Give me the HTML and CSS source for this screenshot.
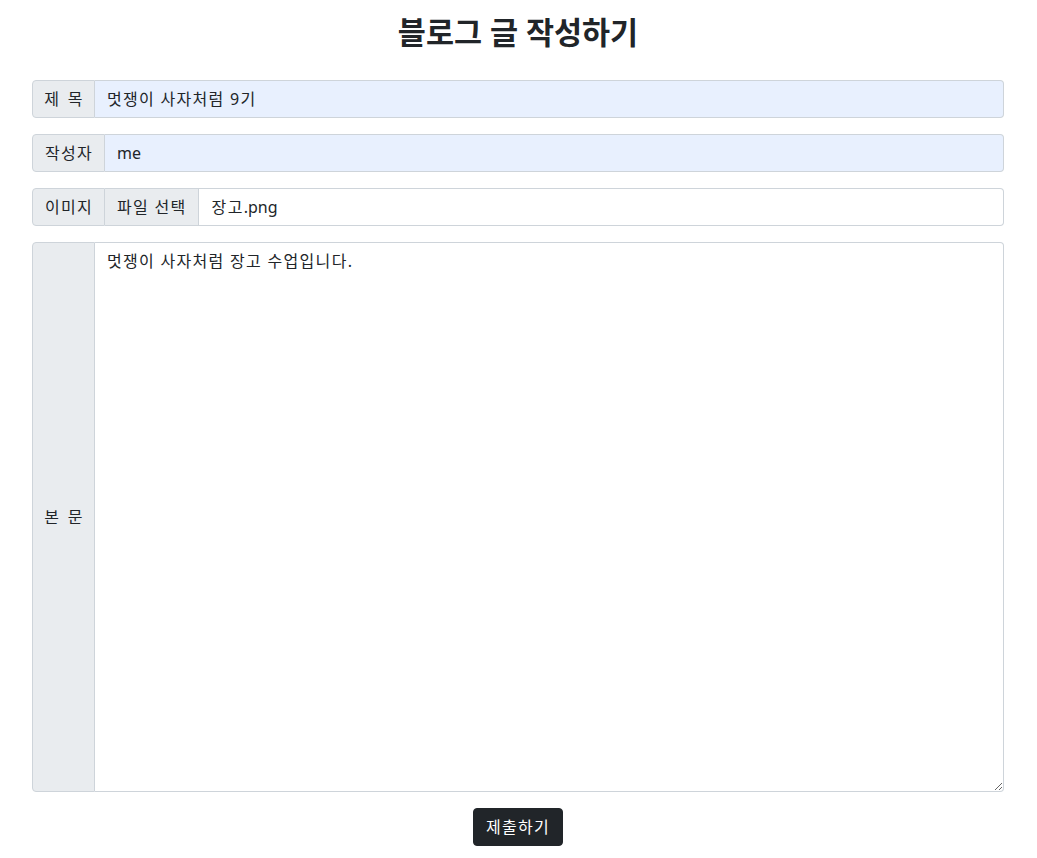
FILE: index.html
```html
<!DOCTYPE html>
<html lang="ko">
<head>
    <meta charset="utf-8">
    <title>블로그 글 작성하기</title>
    <link rel="stylesheet" href="styles.css">
</head>
<body>
    <h2 class="page-title">블로그 글 작성하기</h2>

    <form class="post-form" action="#" method="post">
        <div class="input-group">
            <span class="input-group-text label-short">제 목</span>
            <input type="text" class="form-control filled" name="title" value="멋쟁이 사자처럼 9기">
        </div>
        <div class="input-group">
            <span class="input-group-text">작성자</span>
            <input type="text" class="form-control filled latin" name="writer" value="me">
        </div>
        <div class="input-group">
            <span class="input-group-text">이미지</span>
            <div class="form-control file-control">
                <span class="file-button">파일 선택</span>
                <span class="file-name">장고<span class="latin">.png</span></span>
            </div>
        </div>
        <div class="input-group body-group">
            <span class="input-group-text label-short">본 문</span>
            <textarea class="form-control body-text" name="body">멋쟁이 사자처럼 장고 수업입니다.</textarea>
        </div>
        <div class="actions">
            <button type="submit" class="btn-dark">제출하기</button>
        </div>
    </form>
</body>
</html>
```

FILE: styles.css
```css
body {
    font-family: "Noto Sans", "Noto Sans CJK KR", sans-serif;
    font-size: 16px;
    line-height: 1.5;
    letter-spacing: 1.3px;
    color: #212529;
    background: #fff;
    margin: 0;
    padding: 0 33px 0 32px;
}
.latin { letter-spacing: 0; }
.page-title {
    font-size: 30.5px;
    font-weight: 700;
    line-height: 1.2;
    letter-spacing: 0;
    text-align: center;
    margin: 14px 0 29px;
}
.input-group {
    display: flex;
    align-items: stretch;
    margin-bottom: 16px;
}
.input-group-text {
    display: flex;
    align-items: center;
    padding: 6px 11px 6px 12px;
    background: #e9ecef;
    border: 1px solid #ced4da;
    border-radius: 4px 0 0 4px;
    white-space: nowrap;
    font-size: 16px;
}
.label-short { width: 38px; justify-content: center; word-spacing: 2px; }
.form-control {
    flex: 1;
    min-width: 0;
    font: inherit;
    letter-spacing: inherit;
    color: #212529;
    padding: 6px 12px;
    border: 1px solid #ced4da;
    border-left: none;
    border-radius: 0 4px 4px 0;
    background: #fff;
    margin: 0;
    outline: none;
}
.form-control.latin { letter-spacing: 0; }
.filled { background: #e8f0fe; }
.file-control {
    display: flex;
    padding: 0;
}
.file-button {
    padding: 6px 11px 6px 12px;
    background: #e9ecef;
    border-right: 1px solid #ced4da;
}
.file-name { padding: 6px 12px 6px 13px; }
.body-text {
    height: 550px;
    box-sizing: border-box;
    resize: vertical;
}
.actions {
    display: flex;
    justify-content: center;
}
.btn-dark {
    font: inherit;
    letter-spacing: inherit;
    color: #fff;
    background: #212529;
    border: 1px solid #212529;
    border-radius: 4px;
    padding: 6px 12px;
    cursor: pointer;
}
```
